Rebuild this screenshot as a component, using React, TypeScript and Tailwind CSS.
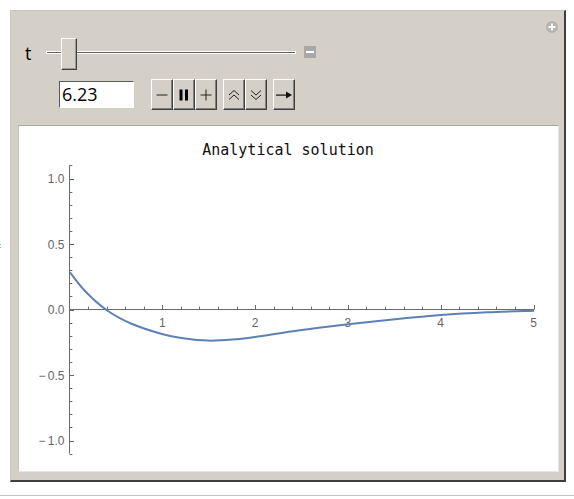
import React from "react";

const uiFont = { fontFamily: '"Open Sans", "Liberation Sans", sans-serif' };

// curve samples in page pixels, traced from the plot
const curvePts: [number, number][] = [
  [70, 272.3], [85, 291], [106.5, 310], [131, 323.5], [162, 334], [185, 338.6],
  [208, 340.6], [232, 339.6], [255, 336.9], [300, 330.2], [348, 324.3],
  [395, 319.2], [441, 315], [487, 312.3], [534, 310.7],
];

const smoothPath = (p: [number, number][]) => {
  let d = `M${p[0][0]},${p[0][1]}`;
  for (let i = 0; i < p.length - 1; i++) {
    const p0 = p[i - 1] || p[i];
    const p1 = p[i];
    const p2 = p[i + 1];
    const p3 = p[i + 2] || p2;
    const c1x = p1[0] + (p2[0] - p0[0]) / 6;
    const c1y = p1[1] + (p2[1] - p0[1]) / 6;
    const c2x = p2[0] - (p3[0] - p1[0]) / 6;
    const c2y = p2[1] - (p3[1] - p1[1]) / 6;
    d += ` C${c1x.toFixed(2)},${c1y.toFixed(2)} ${c2x.toFixed(2)},${c2y.toFixed(2)} ${p2[0]},${p2[1]}`;
  }
  return d;
};

const X0 = 69.5;
const Y0 = 309.5;
const SX = 92.8;
const SY = 131;

const yLabels = [
  { v: 1, t: "1.0" },
  { v: 0.5, t: "0.5" },
  { v: 0, t: "0.0" },
  { v: -0.5, t: "\u2212\u20090.5" },
  { v: -1, t: "\u2212\u20091.0" },
];

const Btn = ({ children }: { children: React.ReactNode }) => (
  <div className="w-[22px] h-[31px] flex items-center justify-center bg-[#d4d0c8] border-t border-l border-white border-r border-b border-r-[#404040] border-b-[#404040] shadow-[inset_-1px_-1px_0_#808080]">
    {children}
  </div>
);

const Plot = () => {
  const yTicks: number[] = [];
  for (let i = -11; i <= 11; i++) yTicks.push(i / 10);
  const xTicks: number[] = [];
  for (let i = 1; i <= 25; i++) xTicks.push(i / 5);

  return (
    <svg width="539" height="345" viewBox="19 126 539 345" className="block">
      <text
        x="288"
        y="155"
        textAnchor="middle"
        fontSize="15"
        fontFamily='"DejaVu Sans Mono", "Liberation Mono", monospace'
        fill="#111"
      >
        Analytical solution
      </text>

      {/* y axis */}
      <line x1={X0} y1={Y0 - 1.1 * SY} x2={X0} y2={Y0 + 1.1 * SY} stroke="#6a6a6a" strokeWidth="1" />
      {yTicks.map((v, i) => {
        const major = Math.abs(Math.round(v * 10) % 5) === 0 && Math.abs(v) <= 1;
        const y = Math.round(Y0 - v * SY) + 0.5;
        return <line key={i} x1={X0} x2={X0 + (major ? 4.5 : 2.8)} y1={y} y2={y} stroke="#6a6a6a" strokeWidth="1" />;
      })}
      {yLabels.map((l) => (
        <text
          key={l.t}
          x="64.5"
          y={Y0 - l.v * SY + 4.5}
          textAnchor="end"
          fontSize="12"
          fontFamily='"Liberation Sans", Arial, sans-serif'
          fill="#666"
        >
          {l.t}
        </text>
      ))}

      {/* x axis */}
      <line x1={X0} y1={Y0} x2={X0 + 5 * SX + 0.5} y2={Y0} stroke="#6a6a6a" strokeWidth="1" />
      {xTicks.map((t, i) => {
        const major = Math.abs(t - Math.round(t)) < 1e-6;
        const x = Math.round(X0 + t * SX) + 0.5;
        return <line key={i} x1={x} x2={x} y1={Y0} y2={Y0 - (major ? 4.5 : 2.8)} stroke="#6a6a6a" strokeWidth="1" />;
      })}
      {[1, 2, 3, 4, 5].map((t) => (
        <text
          key={t}
          x={X0 + t * SX}
          y="326.5"
          textAnchor="middle"
          fontSize="12"
          fontFamily='"Liberation Sans", Arial, sans-serif'
          fill="#666"
        >
          {t}
        </text>
      ))}

      <path d={smoothPath(curvePts)} fill="none" stroke="#5e81b5" strokeWidth="2" strokeLinejoin="round" />
    </svg>
  );
};

const App = () => {
  return (
    <div className="relative bg-white w-[574px] h-[499px] overflow-hidden pt-[10px]">
      {/* stray cell bracket dots at the edge */}
      <span className="absolute left-0 top-[244px] w-px h-px bg-[#8fb8e8]" />
      <span className="absolute left-0 top-[247px] w-px h-px bg-[#8fb8e8]" />

      <div className="relative ml-[10px] w-[556px] h-[472px] bg-[#d4d0c8] border-t border-l border-[#c6c6c6] border-r-2 border-b-2 border-r-[#3e3e3e] border-b-[#3e3e3e] flex flex-col">
        {/* add-annotation button */}
        <div className="absolute top-[10px] right-[6px] w-3 h-3 rounded-full bg-[#b4b4b4] flex items-center justify-center">
          <svg width="8" height="8" viewBox="0 0 8 8">
            <rect x="3" y="0.5" width="2" height="7" fill="#fff" />
            <rect x="0.5" y="3" width="7" height="2" fill="#fff" />
          </svg>
        </div>

        {/* slider row */}
        <div className="mt-[27px] h-[32px] flex items-center pl-[14px]">
          <div className="w-[21px] text-[18px] leading-none text-black -mt-[3px]" style={uiFont}>
            t
          </div>
          <div className="relative w-[250px] h-[32px] flex items-center">
            <div className="w-full h-[3px] border-y border-white border-x bg-[#5f5f5f] -mt-[3px]" />
            <div className="absolute left-[15px] top-0 w-[16px] h-[32px] bg-[#d4d0c8] border-t border-l border-white border-r border-b border-r-[#404040] border-b-[#404040] shadow-[inset_-1px_-1px_0_#9a9a9a]" />
          </div>
          <div className="ml-[8px] -mt-[4px] w-3 h-3 bg-[#a8a8a8] flex items-center justify-center">
            <div className="w-[8px] h-[2px] bg-white" />
          </div>
        </div>

        {/* value + animator row */}
        <div className="mt-[9px] h-[31px] flex items-center pl-[48px]">
          <div
            className="w-[75px] h-[27px] bg-white border-t border-l border-[#5a5a5a] border-r border-b border-r-white border-b-white flex items-center pl-[2px] text-[18px] text-black"
            style={uiFont}
          >
            6.23
          </div>

          <div className="ml-[17px] flex">
            <Btn>
              <svg width="12" height="12" viewBox="0 0 12 12">
                <rect x="0.5" y="5.5" width="11" height="1" fill="#222" />
              </svg>
            </Btn>
            <Btn>
              <svg width="10" height="12" viewBox="0 0 10 12">
                <rect x="0.5" y="0.5" width="3" height="11" fill="#000" />
                <rect x="6" y="0.5" width="3" height="11" fill="#000" />
              </svg>
            </Btn>
            <Btn>
              <svg width="12" height="12" viewBox="0 0 12 12">
                <rect x="0.5" y="5.5" width="11" height="1" fill="#222" />
                <rect x="5.5" y="0.5" width="1" height="11" fill="#222" />
              </svg>
            </Btn>
          </div>

          <div className="ml-[6px] flex">
            <Btn>
              <svg width="12" height="12" viewBox="0 0 12 12" fill="none" stroke="#222" strokeWidth="1">
                <path d="M1 6 L6 1.5 L11 6" />
                <path d="M1 10.5 L6 6 L11 10.5" />
              </svg>
            </Btn>
            <Btn>
              <svg width="12" height="12" viewBox="0 0 12 12" fill="none" stroke="#222" strokeWidth="1">
                <path d="M1 1.5 L6 6 L11 1.5" />
                <path d="M1 6 L6 10.5 L11 6" />
              </svg>
            </Btn>
          </div>

          <div className="ml-[6px] flex">
            <Btn>
              <svg width="16" height="12" viewBox="0 0 16 12">
                <rect x="0" y="5.5" width="12" height="1.2" fill="#111" />
                <path d="M10 2.5 L16 6 L10 9.5 Z" fill="#111" />
              </svg>
            </Btn>
          </div>
        </div>

        {/* plot frame */}
        <div className="mt-[15px] ml-[7px] mr-[5px] mb-[8px] flex-1 bg-white border-t border-t-[#a8a8a8] border-l border-l-[#c4c4c4] border-r border-r-[#e6e6e6] border-b border-b-[#e6e6e6] overflow-hidden">
          <Plot />
        </div>
      </div>

      <div className="mt-[13px] h-px w-full bg-[#c4c4c4]" />
    </div>
  );
};

export default App;
